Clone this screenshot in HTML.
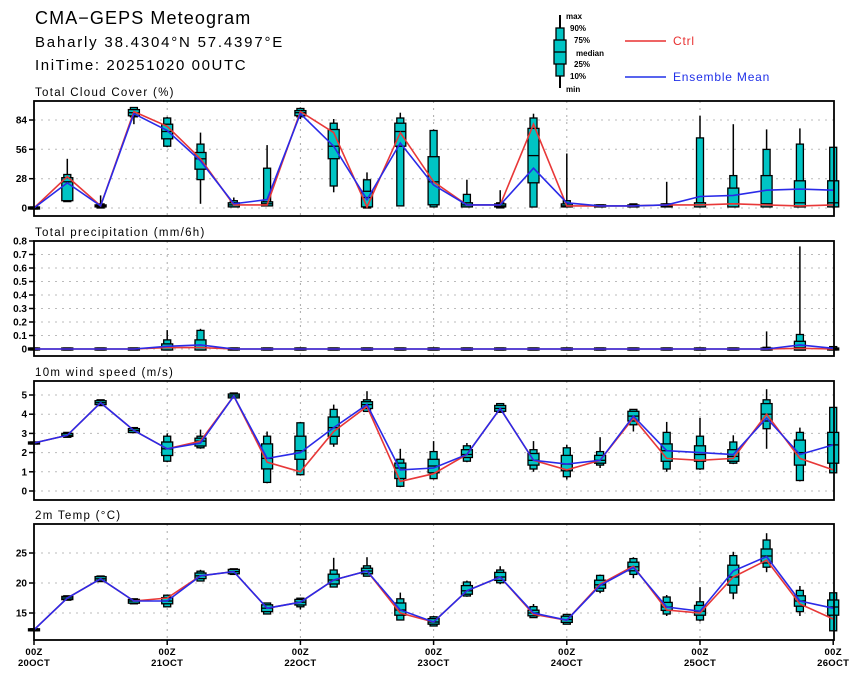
<!DOCTYPE html>
<html><head><meta charset="utf-8">
<style>
html,body{margin:0;padding:0;background:#fff;}
body{width:860px;height:678px;overflow:hidden;position:relative;font-family:"Liberation Sans",sans-serif;}
svg text{font-family:"Liberation Sans",sans-serif;}
</style></head>
<body>
<svg id="s" width="860" height="678" xmlns="http://www.w3.org/2000/svg">
<text x="35" y="24" font-size="18" fill="#000" letter-spacing="1.1">CMA−GEPS Meteogram</text>
<text x="35" y="47" font-size="15" fill="#000" letter-spacing="1.8">Baharly 38.4304°N 57.4397°E</text>
<text x="35" y="70" font-size="15" fill="#000" letter-spacing="1.6">IniTime: 20251020 00UTC</text>
<!-- legend -->
<line x1="560" y1="15" x2="560" y2="88" stroke="#000" stroke-width="2"/>
<rect x="556" y="28" width="8" height="48" fill="#00c4c4" stroke="#000" stroke-width="1.3"/>
<rect x="554" y="40" width="12" height="24" fill="#00c4c4" stroke="#000" stroke-width="1.3"/>
<line x1="554" y1="52" x2="566" y2="52" stroke="#000" stroke-width="1.3"/>
<g font-size="8" font-weight="bold" fill="#000">
<text x="566" y="19">max</text><text x="570" y="31">90%</text><text x="574" y="43">75%</text>
<text x="576" y="56">median</text><text x="574" y="67">25%</text><text x="570" y="79">10%</text><text x="566" y="92">min</text></g>
<line x1="625" y1="41" x2="666" y2="41" stroke="#e83030" stroke-width="1.5"/>
<text x="673" y="45" font-size="12" fill="#e83030" letter-spacing="0.8">Ctrl</text>
<line x1="625" y1="77" x2="666" y2="77" stroke="#2030e8" stroke-width="1.5"/>
<text x="673" y="81" font-size="12" fill="#2030e8" letter-spacing="0.8">Ensemble Mean</text>
<g id="g"></g>
</svg>
<script>
var g=document.getElementById('g'),h='';
function X(i){return 34+i*33.3;}
var panels=[
{t:"Total Cloud Cover (%)",top:101,bot:216,y:function(v){return 208-v*1.0476},ticks:[[0,"0"],[28,"28"],[56,"56"],[84,"84"]],
d:[[0,0,0,0,0,0,0,0,0],[30,24,7,7,8,25,28,31,47],[2,2,1,1,2,2,2,3,12],[92,90,80,88,89,91,93,95,96],[78,74,58,60,67,73,79,85,87],[47,45,4,28,38,47,52,60,72],[3,4,1,2,2,3,4,6,10],[3,8,2,3,3,4,5,37,60],[92,90,85,88,89,91,92,94,96],[72,59,15,22,48,59,74,80,85],[1,8,0,1,2,10,15,26,34],[72,62,2,3,60,73,80,85,91],[25,22,1,2,4,25,48,73,75],[3,3,1,2,2,3,4,12,27],[3,3,1,1,2,2,3,4,17],[80,38,1,2,25,50,75,85,90],[2,5,1,2,2,2,3,6,52],[2,2,1,2,2,2,2,2,3],[2,2,1,2,2,2,2,3,4],[3,3,1,2,2,2,3,3,25],[3,11,1,2,2,3,4,66,88],[4,12,1,2,2,4,18,30,80],[3,17,1,2,2,4,30,55,75],[2,18,1,2,2,5,25,60,76],[3,17,1,2,2,5,25,57,57]]},
{t:"Total precipitation (mm/6h)",top:241,bot:356,y:function(v){return 349-v*135},ticks:[[0,"0"],[0.1,"0.1"],[0.2,"0.2"],[0.3,"0.3"],[0.4,"0.4"],[0.5,"0.5"],[0.6,"0.6"],[0.7,"0.7"],[0.8,"0.8"]],
d:[]},
{t:"10m wind speed (m/s)",top:381,bot:500,y:function(v){return 491-v*19.2},ticks:[[0,"0"],[1,"1"],[2,"2"],[3,"3"],[4,"4"],[5,"5"]],
d:[[2.5,2.5,2.5,2.5,2.5,2.5,2.5,2.5,2.5],[2.9,2.9,2.8,2.85,2.9,2.9,2.95,3,3],[4.6,4.6,4.5,4.5,4.55,4.6,4.65,4.7,4.7],[3.15,3.15,3.05,3.1,3.1,3.15,3.2,3.25,3.25],[2.2,2.2,1.5,1.6,1.9,2.2,2.5,2.8,3],[2.6,2.5,2.2,2.3,2.4,2.6,2.7,2.8,3.2],[4.95,4.95,4.85,4.9,4.9,4.95,5,5.05,5.05],[1.5,1.7,0.4,0.5,1.2,1.7,2.4,2.8,3.1],[1.0,2.0,0.8,0.9,1.7,2.1,2.8,3.5,3.6],[3.1,3.3,2.3,2.5,2.9,3.3,3.8,4.2,4.5],[4.4,4.5,4.2,4.2,4.35,4.5,4.6,4.7,5.2],[0.5,1.1,0.2,0.3,0.7,1.2,1.4,1.6,2.2],[0.9,1.2,0.6,0.7,1.0,1.3,1.6,2.0,2.6],[1.9,1.9,1.5,1.6,1.8,1.9,2.1,2.3,2.5],[4.3,4.3,4.1,4.15,4.2,4.3,4.4,4.5,4.5],[1.6,1.6,1.0,1.2,1.4,1.6,1.9,2.1,2.6],[1.1,1.4,0.6,0.8,1.1,1.4,1.8,2.2,2.4],[1.6,1.6,1.2,1.4,1.5,1.6,1.8,2.0,2.8],[3.8,3.9,3.1,3.5,3.7,3.9,4.1,4.2,4.2],[1.7,2.1,1.0,1.2,1.6,2.1,2.4,3.0,3.6],[1.6,2.0,1.1,1.2,1.6,1.9,2.3,2.8,3.8],[1.7,1.9,1.4,1.5,1.6,1.8,2.1,2.5,2.9],[4.0,3.8,2.2,3.3,3.7,4.0,4.5,4.7,5.3],[1.7,1.9,0.5,0.6,1.4,2.0,2.6,3.0,3.3],[1.1,2.4,1,1,1.5,2.4,3,4.3,4.3]]},
{t:"2m Temp (°C)",top:524,bot:640,y:function(v){return 583-(v-20)*6},ticks:[[15,"15"],[20,"20"],[25,"25"]],
d:[[12.2,12.2,12.2,12.2,12.2,12.2,12.2,12.2,12.2],[17.5,17.5,17.3,17.3,17.4,17.5,17.6,17.7,17.7],[20.7,20.7,20.3,20.4,20.5,20.7,20.9,21,21.1],[17,17,16.7,16.7,16.8,17,17.1,17.2,17.2],[17.5,17,16.1,16.2,16.7,17,17.4,17.8,18],[21.2,21.2,20.3,20.5,20.9,21.2,21.5,21.8,22.2],[21.9,21.9,21.5,21.6,21.7,21.9,22.1,22.2,22.3],[15.8,15.8,14.8,15,15.4,15.8,16.2,16.5,16.6],[16.8,16.8,15.6,16.2,16.5,16.8,17.1,17.3,17.3],[20.5,20.5,19.3,19.5,20,20.5,21.3,22,24.2],[22,22,21.2,21.3,21.7,22,22.3,22.7,24.3],[15,15.5,13.8,14,14.8,15.5,16.5,17.2,18.4],[13.5,13.5,12.9,13,13.3,13.5,13.9,14.2,14.5],[18.7,18.7,17.7,18,18.3,18.7,19.4,20,20.4],[21,21,19.8,20.2,20.6,21,21.6,22,22.8],[14.8,15,14.3,14.4,14.7,15,15.3,15.9,16.5],[13.8,13.8,13.2,13.3,13.6,13.9,14.3,14.6,14.7],[19.8,19.6,18.3,18.8,19.3,19.7,20.3,21.1,21.4],[22.8,22.6,20.8,21.6,22.2,22.7,23.3,23.9,24.3],[15.5,16,14.5,15,15.6,16,16.6,17.5,18],[15,15.3,13.6,14,14.8,15.3,16.1,16.7,19.3],[21,22,17.3,18.5,19.8,21,22.8,24.4,25.2],[23.8,24.4,21.8,22.8,23.5,24.5,25.5,27,28.3],[16.5,17,14.5,15.4,16.3,17,17.7,18.6,19.5],[14,15.8,12,12.2,14.8,16,17,18.2,18.2]]}
];
var pd=[];for(var i=0;i<25;i++)pd.push([0,0,0,0,0,0,0,0,0]);
pd[4]=[0.01,0.02,0,0,0,0.01,0.03,0.06,0.14];pd[5]=[0.01,0.03,0,0,0,0.01,0.06,0.13,0.15];
pd[22]=[0,0,0,0,0,0,0,0.005,0.13];pd[23]=[0.005,0.03,0,0,0,0.01,0.05,0.1,0.76];pd[24]=[0,0.005,0,0,0,0,0,0.01,0.01];
panels[1].d=pd;
panels.forEach(function(p){
  h+='<text x="35" y="'+(p.top-5)+'" font-size="11.5" fill="#000" letter-spacing="1.3">'+p.t+'</text>';
  p.ticks.forEach(function(t){var y=p.y(t[0]).toFixed(1);
    h+='<line x1="34" y1="'+y+'" x2="834" y2="'+y+'" stroke="#bbb" stroke-width="1" stroke-dasharray="2,5"/>';
    h+='<line x1="29" y1="'+y+'" x2="34" y2="'+y+'" stroke="#000" stroke-width="1.5"/>';
    h+='<text x="27" y="'+(+y+3.5)+'" font-size="10" font-weight="bold" text-anchor="end" fill="#000">'+t[1]+'</text>';});
  for(var k=1;k<6;k++){var x=X(k*4).toFixed(1);h+='<line x1="'+x+'" y1="'+p.top+'" x2="'+x+'" y2="'+p.bot+'" stroke="#aaa" stroke-dasharray="2,5"/>';}
  var cl=[],ml=[];
  p.d.forEach(function(d,i){var x=X(i);
    var Y=function(v){return p.y(v).toFixed(1)};
    h+='<line x1="'+x+'" y1="'+Y(d[2])+'" x2="'+x+'" y2="'+Y(d[8])+'" stroke="#000" stroke-width="1.5"/>';
    var hw=3.5,a=p.y(d[7]),b=p.y(d[3]);
    h+='<rect x="'+(x-hw)+'" y="'+(a-1).toFixed(1)+'" width="'+(2*hw)+'" height="'+(b-a+2).toFixed(1)+'" fill="#00c4c4" stroke="#000" stroke-width="1.3"/>';
    hw=5.5;a=p.y(d[6]);b=p.y(d[4]);
    h+='<rect x="'+(x-hw)+'" y="'+(a-1).toFixed(1)+'" width="'+(2*hw)+'" height="'+(b-a+2).toFixed(1)+'" fill="#00c4c4" stroke="#000" stroke-width="1.3"/>';
    h+='<line x1="'+(x-hw)+'" y1="'+Y(d[5])+'" x2="'+(x+hw)+'" y2="'+Y(d[5])+'" stroke="#000" stroke-width="1.3"/>';
    cl.push(x.toFixed(1)+','+Y(d[0]));ml.push(x.toFixed(1)+','+Y(d[1]));});
  h+='<polyline points="'+cl.join(' ')+'" fill="none" stroke="#e83838" stroke-width="1.6"/>';
  h+='<polyline points="'+ml.join(' ')+'" fill="none" stroke="#2a2ae8" stroke-width="1.6"/>';
  h+='<rect x="34" y="'+p.top+'" width="800" height="'+(p.bot-p.top)+'" fill="none" stroke="#000" stroke-width="1.8"/>';
});
var days=["20OCT","21OCT","22OCT","23OCT","24OCT","25OCT","26OCT"];
for(var k=0;k<7;k++){var x=X(k*4).toFixed(1);
  h+='<line x1="'+x+'" y1="640" x2="'+x+'" y2="645" stroke="#000" stroke-width="1.5"/>';
  h+='<text x="'+x+'" y="655" font-size="9.5" font-weight="bold" text-anchor="middle" letter-spacing="0.3">00Z</text>';
  h+='<text x="'+x+'" y="666" font-size="9.5" font-weight="bold" text-anchor="middle" letter-spacing="0.3">'+days[k]+'</text>';}
g.innerHTML=h;
</script>
</body></html>
